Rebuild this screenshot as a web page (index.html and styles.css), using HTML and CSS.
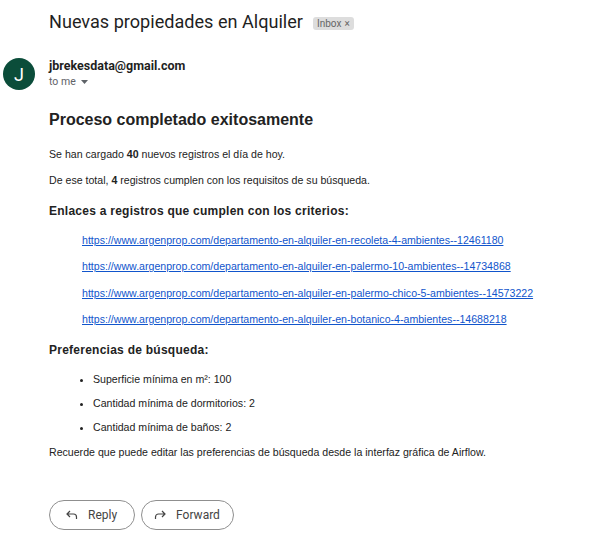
FILE: index.html
```html
<!DOCTYPE html>
<html>
<head>
<meta charset="utf-8">
<link rel="stylesheet" href="styles.css">
</head>
<body>
<div class="page">
  <div class="subject">
    <h1 class="subject-title">Nuevas propiedades en Alquiler</h1>
    <span class="label">Inbox <span class="label-x">×</span></span>
  </div>
  <div class="sender">
    <div class="avatar">J</div>
    <div class="sender-info">
      <div class="sender-name">jbrekesdata@gmail.com</div>
      <div class="to-me">to me <svg class="caret" width="7" height="4" viewBox="0 0 7 4"><path d="M0 0h7L3.5 4z" fill="#5f6368"/></svg></div>
    </div>
  </div>
  <div class="body">
    <h2 class="heading">Proceso completado exitosamente</h2>
    <p class="text">Se han cargado <b>40</b> nuevos registros el día de hoy.</p>
    <p class="text">De ese total, <b>4</b> registros cumplen con los requisitos de su búsqueda.</p>
    <h3 class="subheading">Enlaces a registros que cumplen con los criterios:</h3>
    <ul class="links">
      <li><a href="#">https://www.argenprop.com/departamento-en-alquiler-en-recoleta-4-ambientes--12461180</a></li>
      <li><a href="#">https://www.argenprop.com/departamento-en-alquiler-en-palermo-10-ambientes--14734868</a></li>
      <li><a href="#">https://www.argenprop.com/departamento-en-alquiler-en-palermo-chico-5-ambientes--14573222</a></li>
      <li><a href="#">https://www.argenprop.com/departamento-en-alquiler-en-botanico-4-ambientes--14688218</a></li>
    </ul>
    <h3 class="subheading">Preferencias de búsqueda:</h3>
    <ul class="prefs">
      <li>Superficie mínima en m²: 100</li>
      <li>Cantidad mínima de dormitorios: 2</li>
      <li>Cantidad mínima de baños: 2</li>
    </ul>
    <p class="text">Recuerde que puede editar las preferencias de búsqueda desde la interfaz gráfica de Airflow.</p>
  </div>
  <div class="actions">
    <button class="btn btn-reply"><svg width="12" height="10" viewBox="0 0 12 10"><path d="M4 1L1 4 4 7M1.5 4H7.5a3 3 0 0 1 3 3v2" fill="none" stroke="#444" stroke-width="1.2"/></svg>Reply</button>
    <button class="btn btn-forward"><svg width="12" height="10" viewBox="0 0 12 10"><path d="M8 1L11 4 8 7M10.5 4H4.5a3 3 0 0 0-3 3v2" fill="none" stroke="#444" stroke-width="1.2"/></svg>Forward</button>
  </div>
</div>
</body>
</html>
```

FILE: styles.css
```css
* { box-sizing: border-box; }
html, body { margin: 0; padding: 0; background: #fff; }
.page { width: 589px; height: 553px; font-family: "Liberation Sans", Arial, sans-serif; color: #222; }
.subject { display: flex; align-items: center; gap: 10px; padding: 10px 0 0 49px; height: 34px; }
.subject-title { margin: 0; font-family: Roboto, sans-serif; font-weight: 400; font-size: 18.1px; line-height: 24px; color: #1f1f1f; }
.label { display: inline-flex; align-items: center; gap: 3px; background: #dddddd; color: #666; font-family: Roboto, sans-serif; font-size: 10px; line-height: 13px; padding: 0 4px; border-radius: 3px; margin-top: 2px; }
.label-x { font-size: 10px; }
.sender { display: flex; gap: 14px; padding: 24px 0 0 3px; }
.avatar { width: 32px; height: 32px; border-radius: 50%; background: #0b4d3a; color: #fff; font-family: Roboto, sans-serif; font-size: 18px; display: flex; align-items: center; justify-content: center; }
.sender-info { display: flex; flex-direction: column; }
.sender-name { font-family: Roboto, sans-serif; font-weight: 700; font-size: 12.5px; line-height: 16px; color: #1f1f1f; }
.to-me { font-family: Roboto, sans-serif; font-size: 10.5px; color: #5f6368; line-height: 14px; margin-top: 1px; display: flex; align-items: center; gap: 5px; }
.body { padding: 19px 0 0 49px; }
.heading { margin: 0 0 16px; font-size: 16px; line-height: 22px; font-weight: 700; color: #222; }
.text { margin: 0 0 12px; font-size: 10.6px; line-height: 14px; color: #222; }
.subheading { margin: 16px 0 14px; font-size: 12px; line-height: 16px; font-weight: 700; color: #222; letter-spacing: 0.25px; }
.links { list-style: none; margin: 0; padding: 0 0 0 33px; }
.links li { font-size: 10.6px; line-height: 14px; margin-bottom: 12.3px; }
.links a { color: #1155cc; text-decoration: underline; }
.prefs { margin: 0; padding: 0 0 0 44px; }
.prefs li { font-size: 10.6px; line-height: 14px; margin-bottom: 10px; }
.prefs li:last-child { margin-bottom: 11px; }
.actions { display: flex; gap: 6px; padding: 29px 0 0 49px; }
.btn { display: flex; align-items: center; gap: 10px; height: 30px; border: 1px solid #8f8f8f; border-radius: 15px; background: #fff; font-family: Roboto, sans-serif; font-size: 12px; color: #444; }
.btn-reply { padding: 0 17px 0 16px; }
.btn-forward { padding: 0 13px 0 12px; }
```
